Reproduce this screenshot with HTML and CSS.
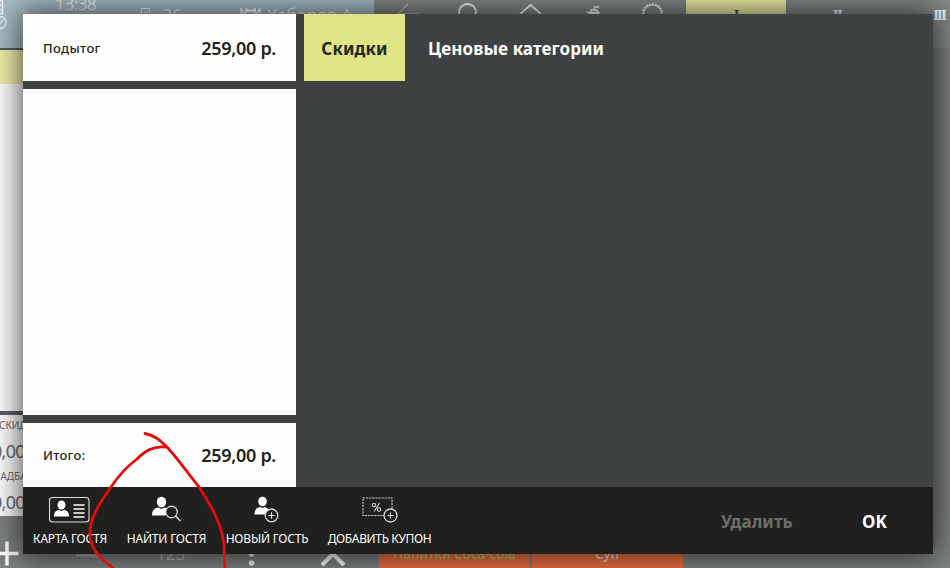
FILE: index.html
```html
<!DOCTYPE html>
<html lang="ru">
<head>
<meta charset="utf-8">
<title>Скидки</title>
<link rel="stylesheet" href="styles.css">
</head>
<body>
<div class="screen">
  <main class="pos">
    <header class="topbar">
      <div class="session">
        <div class="cell-status"><svg width="23" height="30" viewBox="0 0 23 30" fill="none" stroke="#f0f5f7" stroke-width="1.3"><path d="M-3 .5H2.500V15M-3 5H2M-3 9.500H2M-3 13.500H2"/><circle cx="0" cy="22.500" r="6"/><path d="M-3 22l2 2.500L3 20"/></svg></div>
        <div class="cell-time">13:38</div>
        <div class="cell-order"><svg width="10" height="14" viewBox="0 0 10 14" fill="none" stroke="currentColor"><path d="M.5 14V.5h8V14M3 4h4M3 7h4"/></svg><span>26</span></div>
        <div class="cell-user"><svg width="21" height="14" viewBox="0 0 21 14" fill="none" stroke="currentColor" stroke-width="1.500"><path d="M1 0v8M20 0v8M1 1l4 5M20 1l-4 5"/><path d="M5 0l5.500 2L16 0v5l-5.500-1.500L5 5z" fill="currentColor" stroke="none"/></svg><span>Хаборов А.</span></div>
      </div>
      <nav class="tools">
        <svg width="312" height="30" viewBox="374 0 312 30" fill="none" stroke="#fff" stroke-width="1.800"><path d="M408 4L398 14l10 10M398 14h21" stroke="#adb0b1"/><circle cx="467.500" cy="12.500" r="8.500"/><path d="M520 14L530.500 5 541 14"/><path d="M587 12.500h13M591 12v-2h6v2M594 9l1-2h4M589 14h10" stroke-width="1.300"/><circle cx="652.500" cy="14" r="9" stroke-width="1.200"/><circle cx="652.500" cy="14" r="10" stroke-width="1.500" stroke-dasharray="1.600 1.500"/></svg>
      </nav>
      <div class="page active">I</div><div class="page">II</div><div class="page">III</div>
    </header>
    <aside class="order">
      <div class="order-row"></div>
      <div class="order-list"></div>
      <div class="order-sums"><small>СКИДКА</small><b>0,00</b><small>НАДБАВКА</small><b>0,00</b></div>
    </aside>
    <footer class="bottombar">
      <svg width="379" height="52" viewBox="0 516 379 52" fill="none" stroke="#fff" stroke-width="3.500"><path d="M-5 553.500H18.500M7 541.500v24"/><path d="M76 555.500h24" stroke="#b2b4b4" stroke-width="2"/><path d="M322 565l11-11 11 11" stroke="#fff" stroke-width="4"/><circle cx="251.500" cy="554" r="2.800" fill="#f2f4f4" stroke="none"/><circle cx="251.500" cy="563" r="2.800" fill="#f2f4f4" stroke="none"/></svg>
      <span class="count">123</span>
      <div class="dish drinks">Напитки Coca-cola</div>
      <div class="dish">Суп</div>
    </footer>
  </main>

  <section class="dialog">
    <div class="summary">
      <div class="card"><span class="label subtotal">Подытог</span><span class="amount">259,00 р.</span></div>
      <div class="card"></div>
      <div class="card"><span class="label">Итого:</span><span class="amount">259,00 р.</span></div>
    </div>
    <div class="tabs"><div class="tab selected">Скидки</div><div class="tab">Ценовые категории</div></div>
    <div class="actions">
      <div class="action card-action">
        <svg width="42" height="28" viewBox="0 0 42 28"><rect x=".5" y="1.500" width="39.500" height="24.500" rx="3" fill="none" stroke="#ddd" stroke-width="1.100"/><ellipse cx="12.500" cy="9" rx="4" ry="4.500" fill="#fff"/><path d="M5 20.500c0-4 1.500-6 5-6.500l2.500 1 2.500-1c3.500.5 5 2.500 5 6.500z" fill="#fff"/><path d="M24.500 9h11M24.500 13h11M24.500 17h11M24.500 21h11" stroke="#fff" stroke-width="1.600"/></svg>
        <span>КАРТА ГОСТЯ</span>
      </div>
      <div class="action find-action">
        <svg width="32" height="28" viewBox="0 0 32 28"><ellipse cx="10.500" cy="6" rx="4.700" ry="5.300" fill="#fff"/><path d="M1 19.500c0-5 2-7.500 6.500-8l3 1.500 3-1.500 3.500 1-2.500 7z" fill="#fff"/><circle cx="20.500" cy="16" r="5.800" fill="#20201e" stroke="#ddd" stroke-width="1.300"/><path d="M24.500 20l5 5" stroke="#ddd" stroke-width="1.600"/></svg>
        <span>НАЙТИ ГОСТЯ</span>
      </div>
      <div class="action new-action">
        <svg width="26" height="28" viewBox="0 0 26 28"><ellipse cx="8.500" cy="5.500" rx="4.300" ry="4.800" fill="#fff"/><path d="M.5 18.500c0-4.500 2-7 5.500-7.500l2.500 1 2.500-1 3.500 2-3 5.500z" fill="#fff"/><circle cx="17.500" cy="19.500" r="6.300" fill="#20201e" stroke="#ddd" stroke-width="1.200"/><path d="M14.200 19.500h6.600M17.500 16.200v6.600" stroke="#ddd" stroke-width="1.200"/></svg>
        <span>НОВЫЙ ГОСТЬ</span>
      </div>
      <div class="action coupon-action">
        <svg width="36" height="28" viewBox="0 0 36 28" fill="none" stroke="#ccc" stroke-width="1.100"><path d="M1 2h29v17.500H1z" stroke-dasharray="2.200 .9"/><circle cx="12" cy="9" r="1.700"/><circle cx="17" cy="13.500" r="1.700"/><path d="M17.500 7L12 15.500"/><circle cx="28.500" cy="19.500" r="6.500" fill="#20201e" stroke="#ddd" stroke-width="1.300"/><path d="M25.500 19.500h6M28.500 16.500v6" stroke="#ddd" stroke-width="1.200"/></svg>
        <span>ДОБАВИТЬ КУПОН</span>
      </div>
      <div class="command delete">Удалить</div>
      <div class="command ok">OK</div>
    </div>
  </section>

  <svg class="marker" width="950" height="568" viewBox="0 0 950 568"><path d="M145 433.500C153 435 160 440 165 445C176 456 186 471 199 487C212 507 222 525 224 545L225 570M165 447C153 446 145 451 137 459C125 468 117 478 111 487C99 504 90 518 90 532C89 546 97 556 113 568"/></svg>
</div>
</body>
</html>
```
FILE: styles.css
```css
* { box-sizing: border-box; }
body { margin: 0; font-family: "Noto Sans", "Open Sans", sans-serif; }
svg { display: block; flex: none; }
.screen { position: relative; width: 950px; height: 568px; overflow: hidden; }
.pos { width: 950px; height: 568px; background: #7f8181; display: grid; grid-template-rows: 48px 468px 52px; }
.topbar { display: flex; background: #868a8b; white-space: nowrap; overflow: hidden; }
.session { width: 374px; flex: none; display: flex; background: #a9bec8; color: #fff; font-weight: 300; font-size: 18px; line-height: 24px; }
.cell-status { width: 55px; }
.cell-time { width: 86px; font-size: 17px; line-height: 20px; margin-top: -6px; letter-spacing: -.3px; }
.cell-order { width: 99px; display: flex; gap: 11px; padding-top: 3px; }
.cell-user { display: flex; gap: 6px; padding-top: 3px; letter-spacing: -.2px; }
.cell-order svg, .cell-user svg { margin-top: 5px; }
.tools { width: 312px; flex: none; }
.page { width: 100px; flex: none; margin-right: 1px; font: bold 15px/30px "Liberation Serif", serif; text-align: center; color: #fff; letter-spacing: -1.500px; }
.page:last-child { width: 102px; letter-spacing: -2px; }
.active { background: #eff2a5; color: #51544c; }
.order { width: 33px; border-top: 2px solid #555b5e; display: grid; grid-template-rows: 34px 327px 1fr; overflow: hidden; }
.order-row { background: #f1f3ae; }
.order-list { background: #fff; }
.order-sums { border-top: 4px solid #596164; background: #fff; display: flex; flex-direction: column; color: #6b6f71; }
.order-sums small { font-size: 10px; line-height: 21px; margin-left: -7px; }
.order-sums small:first-child { margin-left: -1px; }
.order-sums b { font-weight: 400; font-size: 18px; line-height: 30px; margin-left: -8px; letter-spacing: -.7px; }
.bottombar { display: flex; align-items: stretch; background: #7f8384; overflow: hidden; }
.count { width: 0; margin: 28px 0 0; transform: translateX(-223px); color: #b4b6b6; font-size: 17px; line-height: 20px; }
.dish { width: 151px; flex: none; margin-right: 1.500px; background: #ef7043; color: #f0e0dc; text-align: center; font-size: 13.500px; font-weight: 500; padding-top: 29px; line-height: 18px; }
.drinks { color: #b9c964; }

.dialog { position: absolute; left: 23px; top: 14px; width: 910px; height: 540px; display: grid; grid-template: 473px 67px / 273px 1fr; column-gap: 8px; background: #3f4242; box-shadow: 0 0 28px 3px rgba(0, 0, 0, .68); }
.summary { display: grid; grid-template-rows: 67px 326px 64px; row-gap: 8px; }
.card { background: #fefffd; padding: 0 20px; display: flex; align-items: center; justify-content: space-between; color: #222; }
.label { font-size: 13px; font-weight: 500; letter-spacing: .25px; }
.subtotal { letter-spacing: .35px; }
.amount { font-size: 18px; font-weight: 600; letter-spacing: -.3px; }
.tabs { display: flex; height: 67px; line-height: 69px; font-size: 17px; font-weight: 700; color: #fff; white-space: nowrap; }
.tab { padding-left: 23px; letter-spacing: .1px; }
.selected { width: 101px; padding: 0; text-align: center; background: #dfe583; color: #25261c; }
.actions { grid-column: 1 / 3; display: flex; background: #20201e; color: #fff; }
.action { display: flex; flex: none; flex-direction: column; align-items: center; padding-top: 9px; white-space: nowrap; font-size: 12px; line-height: 18px; letter-spacing: -.2px; }
.action span { margin-top: 6px; }
.card-action { width: 94px; }
.find-action { width: 99px; }
.new-action { width: 102px; }
.coupon-action { width: 123px; letter-spacing: -.35px; }
.command { font-size: 17px; font-weight: 700; line-height: 69px; }
.delete { width: 141px; margin-left: 280px; color: #6d6e6c; letter-spacing: .1px; }
.marker { position: absolute; left: 0; top: 0; }
.marker path { fill: none; stroke: #e30c0c; stroke-width: 2.800; stroke-linecap: round; stroke-linejoin: round; }
```
